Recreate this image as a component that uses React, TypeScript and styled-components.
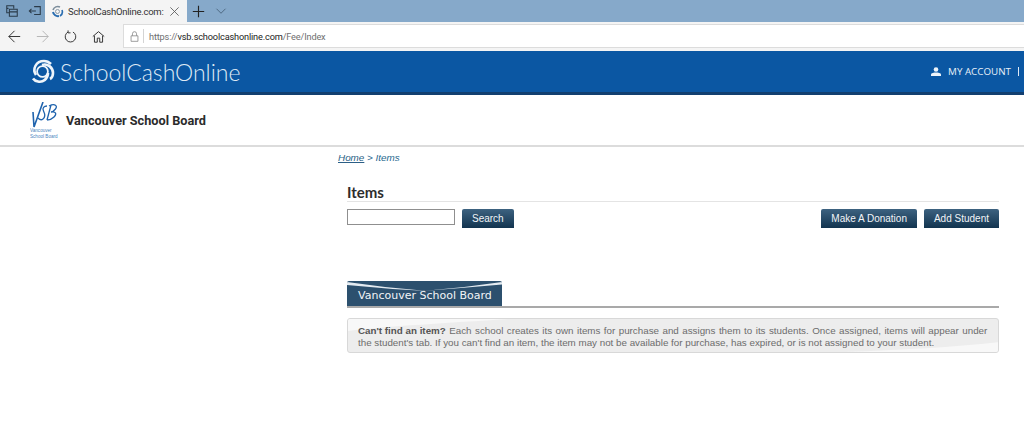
import React from "react";
import styled, { createGlobalStyle } from "styled-components";

const Global = createGlobalStyle`
  html, body {
    margin: 0;
    padding: 0;
    background: #fff;
    overflow: hidden;
  }
`;

const Page = styled.div`
  width: 1024px;
  height: 431px;
  overflow: hidden;
  font-family: "Liberation Sans", Arial, sans-serif;
`;

const TabBar = styled.div`
  height: 22px;
  display: flex;
  background: #86a9ca;
`;

const WindowIcons = styled.div`
  width: 45px;
  display: flex;
  align-items: center;
  gap: 9px;
  padding-left: 5px;
  box-sizing: border-box;
  background: #7ba0c2;
`;

const Tab = styled.div`
  width: 142px;
  display: flex;
  align-items: center;
  background: #f4f4f4;
  padding-left: 6px;
  box-sizing: border-box;
  font: 9.5px "Roboto", "Open Sans", sans-serif;
  letter-spacing: -0.25px;
  color: #333;
`;

const TabTitle = styled.span`
  margin-left: 4px;
  width: 101px;
  white-space: nowrap;
`;

const TabExtras = styled.div`
  display: flex;
  align-items: center;
  gap: 10px;
  padding-left: 5px;
`;

const ToolBar = styled.div`
  height: 29px;
  display: flex;
  align-items: center;
  background: #f4f4f4;
`;

const NavIcons = styled.div`
  width: 123px;
  display: flex;
  align-items: center;
  gap: 15px;
  padding-left: 8px;
  box-sizing: border-box;
`;

const Address = styled.div`
  flex: 1;
  height: 22px;
  margin-top: -1px;
  display: flex;
  align-items: center;
  background: #fff;
  border: 1px solid #dcdcdc;
  border-right: 0;
  padding-left: 5px;
  font: 9.2px "Roboto", "Open Sans", sans-serif;
  letter-spacing: -0.16px;
  color: #6f6f6f;
`;

const AddressDivider = styled.span`
  width: 1px;
  height: 14px;
  margin: 0 5px 0 3px;
  background: #d4d4d4;
`;

const Host = styled.span`
  color: #222;
`;

const BlueHeader = styled.header`
  height: 41px;
  display: flex;
  align-items: center;
  justify-content: space-between;
  background: #0b57a3;
  border-bottom: 3px solid #123f70;
  padding: 0 5px 0 30px;
`;

const Brand = styled.div`
  display: flex;
  align-items: center;
  gap: 5px;
  font: 300 23px "Lato", "Open Sans", sans-serif;
  color: #dfeaf5;
`;

const Account = styled.div`
  display: flex;
  align-items: center;
  font: 9.8px "Open Sans", "Liberation Sans", sans-serif;
  color: #e8f0f8;
`;

const AccountLabel = styled.span`
  margin-left: 7px;
  padding-right: 7px;
`;

const AccountBar = styled.span`
  width: 1px;
  height: 9px;
  background: #dfeaf5;
`;

const SchoolBar = styled.div`
  height: 50px;
  display: flex;
  align-items: center;
  gap: 7px;
  padding-left: 30px;
  border-bottom: 2px solid #dcdcdc;
`;

const SchoolName = styled.div`
  font: 700 12.7px "Roboto", "Liberation Sans", sans-serif;
  color: #2b2b2b;
`;

const Main = styled.main`
  padding: 5px 25px 0 338px;
`;

const Crumbs = styled.div`
  font: italic 9.9px/12px "Liberation Sans", Arial, sans-serif;
  color: #27688f;
`;

const CrumbLink = styled.a`
  color: #2c5f86;
  text-decoration: underline;
`;

const Content = styled.div`
  margin-left: 9px;
`;

const Heading = styled.h1`
  margin: 19px 0 0;
  font: 700 15px/18px "Lato", "Open Sans", sans-serif;
  color: #2d2d2d;
  border-bottom: 1px solid #e4e4e4;
`;

const Controls = styled.div`
  margin-top: 7px;
  display: flex;
  align-items: flex-start;
`;

const SearchInput = styled.input`
  width: 108px;
  height: 16px;
  margin-right: 7px;
  padding: 0;
  box-sizing: border-box;
  border: 1px solid #8f8f8f;
  background: #fff;
`;

const Button = styled.button<{ $last?: boolean }>`
  height: 19px;
  padding: 0 10px;
  margin-left: ${(p) => (p.$last ? "7px" : "0")};
  border: 0;
  border-radius: 2px 2px 0 0;
  background: linear-gradient(#3d6280, #12344f);
  font: 10px "Liberation Sans", Arial, sans-serif;
  color: #f2f5f8;
`;

const Spacer = styled.div`
  flex: 1;
`;

const SectionTabs = styled.div`
  margin-top: 53px;
  display: flex;
  border-bottom: 2px solid #a9a9a9;
`;

const SectionTab = styled.div`
  position: relative;
  width: 155px;
  height: 25px;
  box-sizing: border-box;
  padding: 8px 0 0 11px;
  overflow: hidden;
  background: #2c506e;
  border-radius: 2px 2px 0 0;
  font: 11px "DejaVu Sans", "Open Sans", sans-serif;
  color: #f1f4f7;
`;

const TabSwoosh = styled.svg`
  position: absolute;
  left: 0;
  top: 0;
`;

const SectionLabel = styled.span`
  position: relative;
`;

const Notice = styled.div`
  position: relative;
  margin-top: 10px;
  height: 35px;
  box-sizing: border-box;
  padding: 6px 10px;
  overflow: hidden;
  background: #ededed;
  border: 1px solid #d8d8d8;
  border-radius: 3px;
  font: 9.8px/11.5px "Liberation Sans", Arial, sans-serif;
  color: #6c6c6c;
`;

const NoticeSheen = styled.svg`
  position: absolute;
  left: 0;
  top: 0;
`;

const NoticeLine = styled.div<{ $spread?: boolean }>`
  position: relative;
  white-space: nowrap;
  word-spacing: ${(p) => (p.$spread ? "0.72px" : "0")};

  b {
    color: #555;
    word-spacing: 0;
  }
`;

const Stroke = ({ d, color = "#3c3c3c", size = 16, width = 1.2 }: { d: string; color?: string; size?: number; width?: number }) => (
  <svg width={size} height={size} viewBox="0 0 16 16" fill="none" stroke={color} strokeWidth={width}>
    <path d={d} />
  </svg>
);

const Favicon = () => (
  <svg width="13" height="13" viewBox="0 0 13 13" fill="none">
    <path d="M2 5a5 5 0 0 1 7-3" stroke="#7d8e9c" strokeWidth="1.6" />
    <path d="M11 5a5 5 0 0 1-2 6" stroke="#2a6db0" strokeWidth="1.6" />
    <path d="M2 7a5 5 0 0 0 6 4" stroke="#2a6db0" strokeWidth="2" />
    <circle cx="6.5" cy="6.5" r="2" stroke="#8a9aa8" />
  </svg>
);

const BrandMark = () => (
  <svg width="25" height="25" viewBox="0 0 25 25" fill="none" stroke="#eef4fa" strokeWidth="2.6">
    <circle cx="12.5" cy="12.5" r="5.4" strokeWidth="1.8" />
    <path d="M6 16C2 10 6 2 14 2c3 0 5 1 7 3" />
    <path d="M12 6c6-2 11 3 11 8 0 3-1 5-3 6" />
    <path d="M18 14c0 6-5 9.500-10 8.500-2-.4-4-1.500-5-3" />
  </svg>
);

const VsbLogo = () => (
  <svg width="29" height="37" viewBox="0 0 29 37" fill="none">
    <path d="M3 10l1 15L13 0" stroke="#1f63ad" strokeWidth="1.6" />
    <path d="M17 4c-3 0-5 2-3.500 5s2 6-.5 8-4 0-5-1" stroke="#1f63ad" strokeWidth="1.3" />
    <path d="M21 3l-4 15M19 4c6-3 9 0 6.500 3S21 10 21 10c5-1 6 2 3 5s-6 3-7 3" stroke="#1f63ad" strokeWidth="1.3" />
    <text x="0" y="30" fontSize="4.6" fill="#4a86c0" fontFamily="Liberation Sans">Vancouver</text>
    <text x="0" y="36" fontSize="4.6" fill="#4a86c0" fontFamily="Liberation Sans">School Board</text>
  </svg>
);

export default function App() {
  return (
    <Page>
      <Global />
      <TabBar>
        <WindowIcons>
          <Stroke size={14} d="M2 5V2h8v3M2 5h2M5 6h9v8H5zM5 9h9M2 5v5h3" color="#2a3a48" />
          <Stroke size={14} d="M7 3h7v9H7M1 8h8M4 5.500 1.500 8 4 10.500" color="#2a3a48" />
        </WindowIcons>
        <Tab>
          <Favicon />
          <TabTitle>SchoolCashOnline.com:</TabTitle>
          <Stroke size={11} d="M2 2l12 12M14 2L2 14" color="#555" />
        </Tab>
        <TabExtras>
          <Stroke size={13} width={1.4} d="M8 1v14M1 8h14" color="#222" />
          <Stroke size={12} d="M2 5l6 6 6-6" color="#48627a" />
        </TabExtras>
      </TabBar>
      <ToolBar>
        <NavIcons>
          <Stroke size={13} d="M15 8H1M8 1L1 8l7 7" color="#333" />
          <Stroke size={13} d="M1 8h14M8 1l7 7-7 7" color="#b5b5b5" />
          <Stroke size={13} d="M11 2.500A6.500 6.500 0 1 1 5 2.500M5 .5v3h3" color="#333" />
          <Stroke size={13} d="M1 8l7-6 7 6M3 7v8h3.500v-5h3v5H13V7" color="#333" />
        </NavIcons>
        <Address>
          <Stroke size={11} d="M3 7h10v8H3zM5 7V4a3 3 0 0 1 6 0v3" color="#8a8a8a" />
          <AddressDivider />
          https://<Host>vsb.schoolcashonline.com</Host>/Fee/Index
        </Address>
      </ToolBar>
      <BlueHeader>
        <Brand>
          <BrandMark />
          SchoolCashOnline
        </Brand>
        <Account>
          <svg width="10" height="9" viewBox="0 0 10 9" fill="#eef4fa">
            <circle cx="5" cy="2.500" r="2.300" />
            <path d="M0 9V7.500C0 6 3 5.500 5 5.500s5 .5 5 2V9z" />
          </svg>
          <AccountLabel>MY ACCOUNT</AccountLabel>
          <AccountBar />
        </Account>
      </BlueHeader>
      <SchoolBar>
        <VsbLogo />
        <SchoolName>Vancouver School Board</SchoolName>
      </SchoolBar>
      <Main>
        <Crumbs>
          <CrumbLink href="#">Home</CrumbLink> &gt; Items
        </Crumbs>
        <Content>
          <Heading>Items</Heading>
          <Controls>
            <SearchInput />
            <Button>Search</Button>
            <Spacer />
            <Button>Make A Donation</Button>
            <Button $last>Add Student</Button>
          </Controls>
          <SectionTabs>
            <SectionTab>
              <TabSwoosh width="155" height="25" viewBox="0 0 155 25">
                <path d="M0 1Q40 7 80 10Q40 8 0 4z" fill="#e4ebf1" />
                <path d="M155 1Q115 7 76 10Q115 7 155 3.500z" fill="#e4ebf1" />
              </TabSwoosh>
              <SectionLabel>Vancouver School Board</SectionLabel>
            </SectionTab>
          </SectionTabs>
          <Notice>
            <NoticeSheen width="652" height="35" viewBox="0 0 652 35">
              <path d="M0 0h160C100 4 40 7 0 12z" fill="#f8f8f8" />
              <path d="M652 35H430c80-2 160-5 222-12z" fill="#f8f8f8" />
            </NoticeSheen>
            <NoticeLine $spread>
              <b>Can't find an item?</b> Each school creates its own items for purchase and assigns them to its students. Once assigned, items will appear under
            </NoticeLine>
            <NoticeLine>
              the student's tab. If you can't find an item, the item may not be available for purchase, has expired, or is not assigned to your student.
            </NoticeLine>
          </Notice>
        </Content>
      </Main>
    </Page>
  );
}
